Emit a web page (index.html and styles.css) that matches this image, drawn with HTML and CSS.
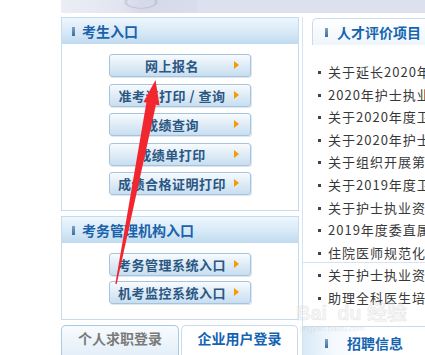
FILE: index.html
```html
<!DOCTYPE html>
<html lang="zh-CN">
<head>
    <meta charset="UTF-8">
    <meta name="viewport" content="width=device-width, initial-scale=1.0">
    <title>考试服务</title>
    <link rel="stylesheet" href="styles.css">
</head>
<body>
<div class="page">
    <div class="banner"></div>

    <div class="main">
        <!-- 左侧入口 -->
        <div class="left">
            <div class="panel">
                <div class="panel-head"><i class="mark"></i>考生入口</div>
                <div class="panel-body">
                    <a class="btn" href="#">网上报名</a>
                    <a class="btn" href="#">准考证打印 / 查询</a>
                    <a class="btn" href="#">成绩查询</a>
                    <a class="btn" href="#">成绩单打印</a>
                    <a class="btn" href="#">成绩合格证明打印</a>
                </div>
            </div>

            <div class="panel panel-sys">
                <div class="panel-head"><i class="mark"></i>考务管理机构入口</div>
                <div class="panel-body panel-body-sys">
                    <a class="btn" href="#">考务管理系统入口</a>
                    <a class="btn" href="#">机考监控系统入口</a>
                </div>
            </div>

            <div class="tabs">
                <a class="tab" href="#">个人求职登录</a>
                <a class="tab tab-on" href="#">企业用户登录</a>
            </div>
        </div>

        <!-- 右侧资讯 -->
        <div class="right">
            <div class="news">
                <div class="news-head"><i class="mark"></i>人才评价项目</div>
                <ul class="news-list">
                    <li>关于延长2020年护士执业资格考试报名时间的通知</li>
                    <li>2020年护士执业资格考试网上报名须知</li>
                    <li>关于2020年度卫生专业技术资格考试报名的通知</li>
                    <li>关于2020年护士执业资格考试有关问题的通知</li>
                    <li>关于组织开展第九批住院医师培训的通知</li>
                    <li>关于2019年度卫生专业技术资格考试合格标准</li>
                    <li>关于护士执业资格考试成绩查询的通知</li>
                    <li>2019年度委直属和联系单位考试安排</li>
                    <li>住院医师规范化培训结业考核</li>
                    <li>关于护士执业资格考试合格证明打印</li>
                    <li>助理全科医生培训结业考核通知</li>
                </ul>
            </div>
            <div class="recruit-head"><i class="mark"></i>招聘信息</div>
        </div>
    </div>

    <!-- 截图标注 -->
    <svg class="pointer" width="425" height="355" viewBox="0 0 425 355">
        <polygon points="146.5,102 156,104.5 116.7,284 115.3,284" fill="#f2262f"/>
        <polygon points="155.5,80 143.5,102 159.5,105.5" fill="#f2262f"/>
    </svg>

    <div class="watermark">
        <span class="wm-big">Bai<b>du</b> 经验</span>
        <span class="wm-small">jingyan.baidu.com</span>
    </div>
</div>
</body>
</html>
```

FILE: styles.css
```css
body {
    margin: 0;
    font-family: "Noto Sans CJK SC", sans-serif;
    background-color: #fff;
    width: 425px;
    height: 355px;
    overflow: hidden;
}

a {
    text-decoration: none;
}

.page {
    position: relative;
    height: 355px;
    padding-left: 61px;
}

.banner {
    height: 13px;
    background:
        radial-gradient(ellipse 22px 9px at 80px 2px, transparent 60%, rgba(150, 150, 170, 0.35) 68%, transparent 80%),
        linear-gradient(90deg, #eceef6 0, #e2e4f0 60px, #d6d9ea 80px, #d9dcec 136px, #dde0ef 137px);
}

.main {
    display: flex;
    margin-top: 4px;
}

.left {
    width: 238px;
    flex: none;
}

/* 入口面板 */
.panel {
    border: 1px solid #c6dbee;
}

.panel-sys {
    margin-top: 5px;
}

.panel-head {
    display: flex;
    align-items: center;
    height: 26px;
    padding-left: 10px;
    background: linear-gradient(#edf6fd, #d7e9f7 55%, #bfdaef);
    color: #1b62ab;
    font-size: 14px;
    font-weight: bold;
}

.mark {
    display: inline-block;
    width: 3px;
    height: 9px;
    margin-right: 7px;
    background: linear-gradient(#7aa3c8, #3f6f9e);
}

.panel-body {
    display: flex;
    flex-direction: column;
    align-items: center;
    gap: 6.5px;
    padding: 10px 0 15px;
    background: #fff;
}

.panel-body-sys {
    gap: 5px;
}

.btn {
    position: relative;
    box-sizing: border-box;
    width: 142px;
    height: 23px;
    padding-right: 16px;
    border: 1px solid #a6c4dd;
    border-radius: 3px;
    background: linear-gradient(#f8fbfe, #e1edf7 45%, #c8def0);
    box-shadow: 1px 1px 0 #dbe7f1;
    color: #2b5783;
    font-size: 13px;
    font-weight: bold;
    letter-spacing: 0.5px;
    line-height: 21px;
    text-align: center;
    white-space: nowrap;
}

.btn::after {
    content: "";
    position: absolute;
    right: 11px;
    top: 6px;
    border-left: 5px solid #f59c00;
    border-top: 4px solid transparent;
    border-bottom: 4px solid transparent;
}

/* 登录标签 */
.tabs {
    display: flex;
    gap: 2px;
    margin-top: 5px;
}

.tab {
    box-sizing: border-box;
    width: 118px;
    height: 32px;
    border: 1px solid #aac9e2;
    border-bottom: none;
    border-radius: 5px 5px 0 0;
    background: linear-gradient(#f8fbfe, #e2eef8);
    color: #7a7a7a;
    font-size: 14px;
    font-weight: bold;
    line-height: 24px;
    text-align: center;
}

.tab-on {
    width: 117px;
    border-color: #c6dbee;
    background: #fff;
    color: #1263b4;
}

/* 右侧 */
.right {
    flex: 1;
    min-width: 0;
    margin-left: 3px;
    border-left: 1px solid #d2e3f1;
    overflow: hidden;
}

.news {
    height: 244px;
    border-bottom: 1px solid #d6e5f1;
}

.news-head {
    display: flex;
    align-items: center;
    height: 26px;
    margin: 1px 0 0 9px;
    padding-left: 12px;
    border: 1px solid #c6dbee;
    border-right: none;
    border-bottom: none;
    border-radius: 5px 0 0 0;
    background: linear-gradient(#fff, #eef5fb);
    color: #1565b0;
    font-size: 14px;
    font-weight: bold;
    white-space: nowrap;
}

.news-head .mark {
    margin-right: 9px;
}

.news-list {
    list-style: none;
    margin: 0;
    padding: 16px 0 0 15px;
    font-size: 13px;
    letter-spacing: 1px;
    line-height: 22.6px;
    color: #383838;
}

.news-list li {
    position: relative;
    padding-left: 10px;
    white-space: nowrap;
}

.news-list li::before {
    content: "";
    position: absolute;
    left: 0;
    top: 10px;
    width: 3px;
    height: 3px;
    background: #444;
}

.recruit-head {
    display: flex;
    align-items: center;
    height: 32px;
    margin-top: 63px;
    padding-left: 22px;
    border-top: 1px solid #c6dbee;
    background: linear-gradient(90deg, #d8e9f7, #f4f9fd 30px, #fff 60px);
    color: #1565b0;
    font-size: 14px;
    font-weight: bold;
    white-space: nowrap;
}

.recruit-head .mark {
    margin-right: 19px;
}

/* 标注和水印 */
.pointer {
    position: absolute;
    left: 0;
    top: 0;
    pointer-events: none;
}

.watermark {
    position: absolute;
    left: 296px;
    top: 302px;
    display: flex;
    flex-direction: column;
    pointer-events: none;
    color: rgba(235, 235, 235, 0.5);
}

.wm-big {
    font-family: "Liberation Sans", "Noto Sans CJK SC", sans-serif;
    font-size: 20px;
    font-weight: bold;
    line-height: 22px;
    -webkit-text-stroke: 0.5px rgba(185, 185, 185, 0.35);
}

.wm-big b {
    margin-left: 10px;
}

.wm-small {
    font-family: "Liberation Sans", sans-serif;
    font-size: 8px;
    line-height: 9px;
    color: rgba(200, 200, 200, 0.4);
    padding-left: 4px;
}
```
